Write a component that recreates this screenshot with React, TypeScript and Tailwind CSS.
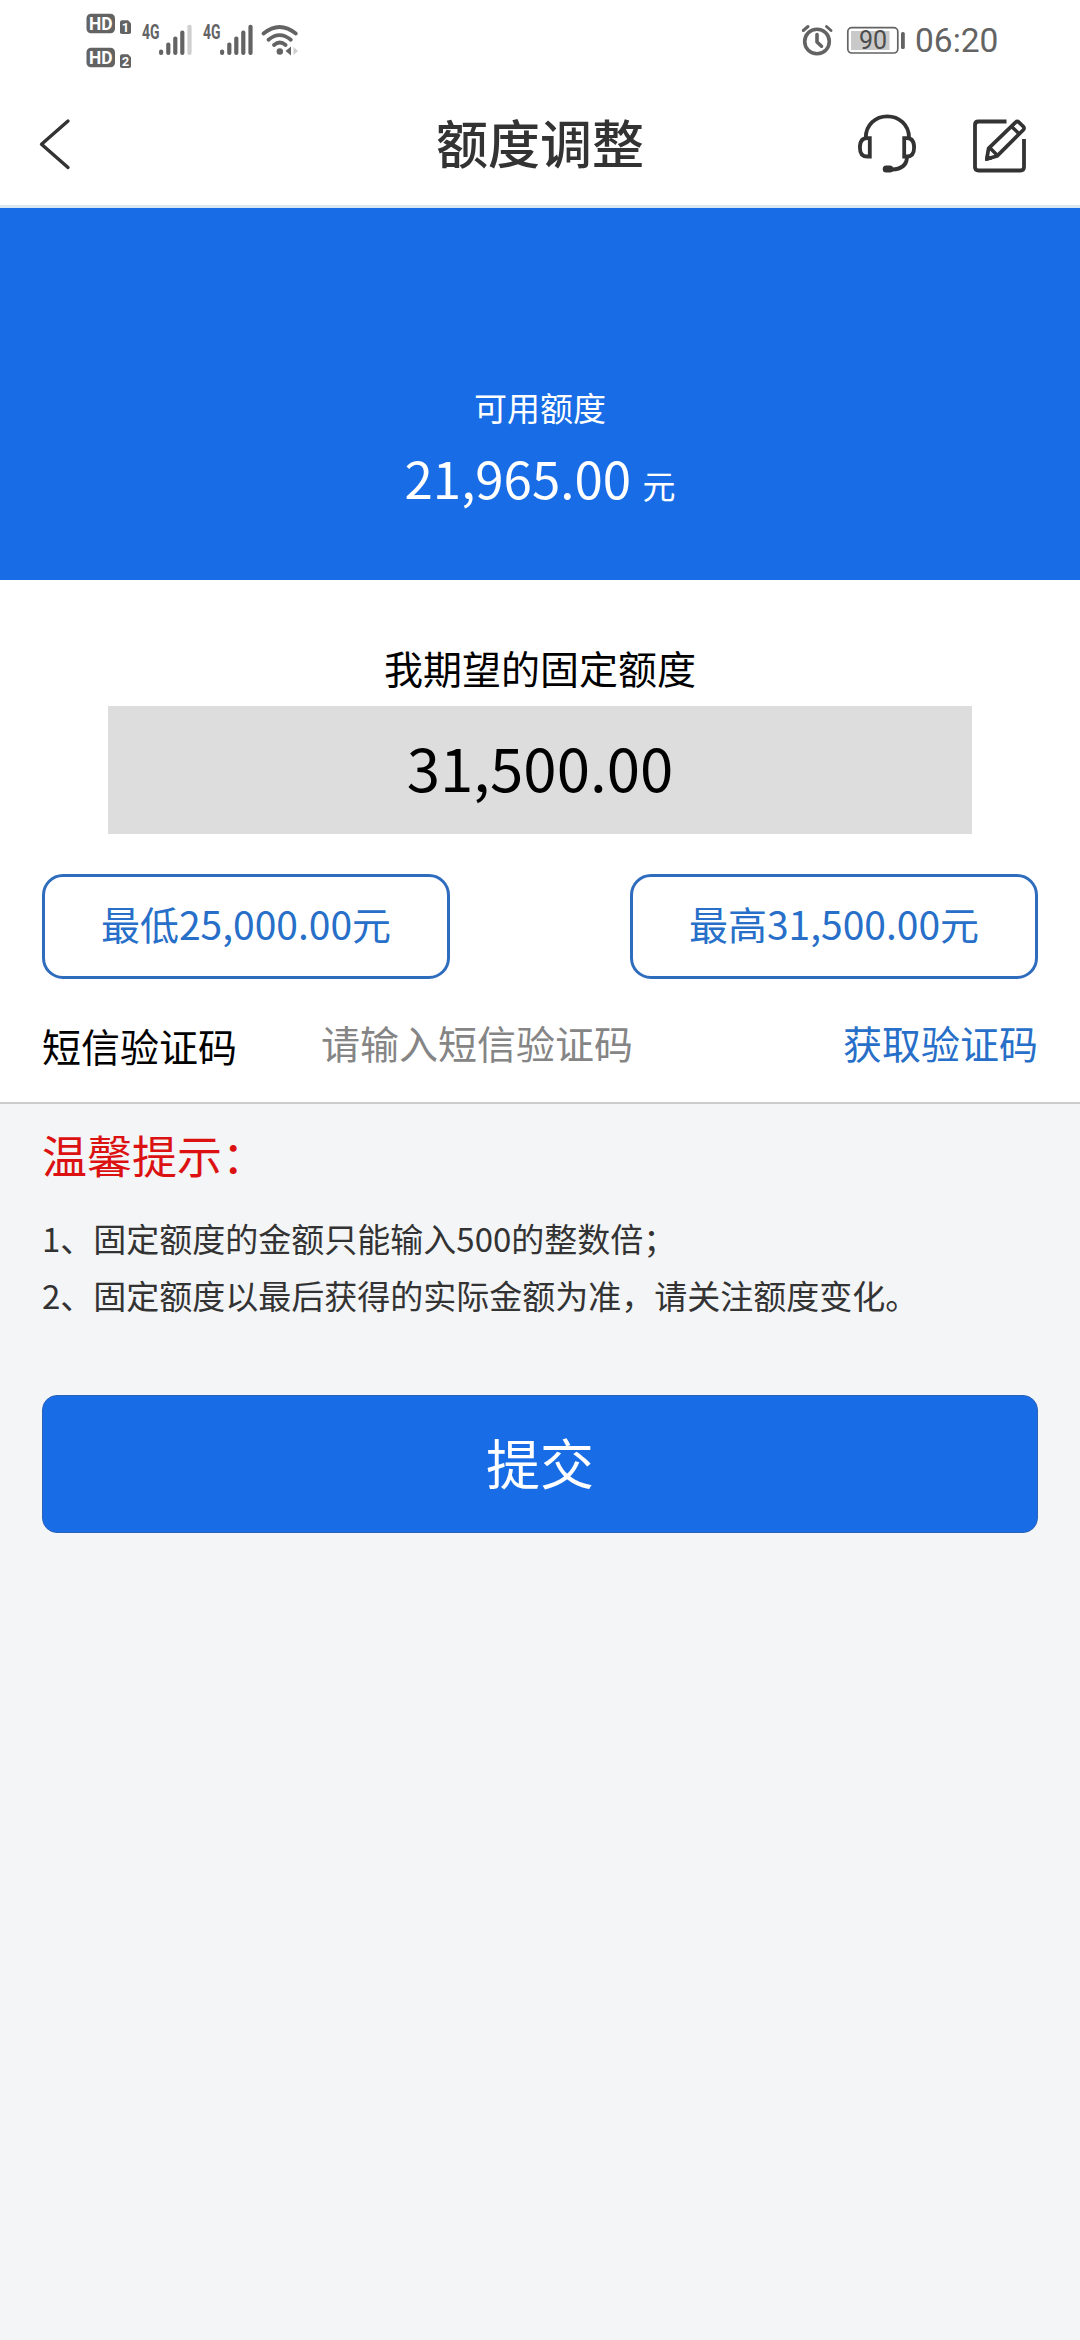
import React, { useState } from 'react';

const TIPS = [
  '1、固定额度的金额只能输入500的整数倍；',
  '2、固定额度以最后获得的实际金额为准，请关注额度变化。',
];

const SignalGroup: React.FC<{ x: number; weak?: boolean }> = ({ x, weak }) => (
  <g transform={`translate(${x} 0)`}>
    <text x="0" y="38.7" fontSize="19.5" fontWeight="700" textLength="17.5" lengthAdjust="spacingAndGlyphs">4G</text>
    <rect x="17" y="49.5" width="4.2" height="5.5" rx="2" />
    <rect x="24.2" y="42.5" width="4.2" height="12.5" rx="2" />
    <rect x="31.2" y="36.5" width="4.2" height="18.5" rx="2" />
    <rect x="38.2" y="30.5" width="4.2" height="24.5" rx="2" />
    <rect x="45.4" y="24.8" width="4.2" height="30.2" rx="2" fill={weak ? '#cfcfcf' : '#636363'} />
  </g>
);

const SimBadge: React.FC<{ y: number; slot: string }> = ({ y, slot }) => (
  <g transform={`translate(0 ${y})`}>
    <rect x="86.5" y="0" width="28.5" height="19.5" rx="4.5" />
    <text x="89" y="16.4" fontSize="19" fontWeight="700" fill="#fff" textLength="23.5" lengthAdjust="spacingAndGlyphs">HD</text>
    <path d="M120 8.5 Q120 6.5 122 6.5 H128 L131 9.5 V18.5 Q131 20.3 129 20.3 H122 Q120 20.3 120 18.5 Z" />
    <text x="125.6" y="18" fontSize="13" fontWeight="700" fill="#fff" textAnchor="middle">{slot}</text>
  </g>
);

const StatusLeft = () => (
  <svg className="h-20 w-80" viewBox="0 0 320 80" fill="#636363" fontFamily="Roboto, sans-serif">
    <SimBadge y={13.8} slot="1" />
    <SimBadge y={47.8} slot="2" />
    <SignalGroup x={142} weak />
    <SignalGroup x={203} />
    {/* wifi */}
    <g fill="none" stroke="#636363" strokeWidth="3.8" strokeLinecap="round">
      <path d="M263.5 33.5 Q279.5 20.5 295.8 33.5" />
      <path d="M268.5 39.8 Q279.5 30.5 290.8 39.8" />
      <path d="M274 45 Q279.8 40 285.6 45" />
    </g>
    <circle cx="279.8" cy="51.5" r="3.2" />
    <path d="M291 46.5 V55.5 L285.5 51 Z" />
    <path d="M293.5 47 V55 L298 51 Z" fill="#cfcfcf" />
  </svg>
);

const StatusRight = () => (
  <svg className="h-20 w-[120px]" viewBox="790 0 120 80" fill="none" stroke="#636363" strokeLinecap="round">
    {/* alarm */}
    <g strokeWidth="3.6">
      <circle cx="817" cy="41.5" r="12.3" />
      <path d="M817 34.5 V42 L821.5 46.2" strokeLinejoin="round" />
      <path d="M803.3 30.5 L808 26.5 M826.5 26.5 L831 30.5" strokeWidth="3" />
    </g>
    {/* battery */}
    <rect x="847.8" y="27.6" width="50" height="25.4" rx="4" strokeWidth="1.7" />
    <rect x="851" y="31" width="38.5" height="19" fill="#c9c9c9" stroke="none" />
    <rect x="901" y="32" width="3.8" height="17" rx="1.6" fill="#636363" stroke="none" />
    <text x="873" y="49.2" fontSize="25" fill="#4d4d4d" stroke="none" textAnchor="middle" fontFamily="Roboto, sans-serif">90</text>
  </svg>
);

const BackIcon = () => (
  <svg className="h-[60px] w-10" viewBox="34 112.5 40 60" fill="none" stroke="#333" strokeWidth="3.4" strokeLinecap="round" strokeLinejoin="round">
    <path d="M68 120.5 L41.5 143.7 L68 167" />
  </svg>
);

const ServiceIcon = () => (
  <svg className="h-[60px] w-[60px]" viewBox="37 22.5 60 60" fill="none" stroke="#333" strokeWidth="3.8">
    <path d="M45.8 47 C45.8 34.5 55.5 25.8 67.3 25.8 C79 25.8 89 34.5 89 47" />
    <path d="M49.8 47.6 V66 H47 C42 66 39.9 62.5 39.9 57 C39.9 51.5 42 47.6 47 47.6 Z" />
    <path d="M84.2 47.6 V66 H87 C92 66 94.1 62.5 94.1 57 C94.1 51.5 92 47.6 87 47.6 Z" />
    <path d="M87 67 C86.5 74.5 82 78.6 72 79" />
    <rect x="62.7" y="75" width="10.6" height="7" rx="3.5" fill="#333" stroke="none" />
  </svg>
);

const EditIcon = () => (
  <svg className="h-[60px] w-[60px]" viewBox="150 22.5 60 60" fill="none" stroke="#333" strokeWidth="3.8" strokeLinejoin="round">
    <path d="M186.5 31 H158.5 Q155 31 155 34.5 V76.5 Q155 80 158.5 80 H200.5 Q204 80 204 76.5 V48.5" />
    <path d="M166.8 68.6 L168.6 57.8 L195.5 31.8 Q197.3 30.2 199 31.8 L203.3 36 Q204.8 37.8 203.2 39.5 L177 65.6 Z" strokeWidth="3.7" />
    <path d="M169.5 57 L178 65.5 M191.5 36 L199.5 43.5" strokeWidth="3.4" />
    <path d="M165.5 70 L166.6 63.5 L172 68.5 Z" fill="#333" strokeWidth="1" />
  </svg>
);

const App: React.FC = () => {
  const [amount, setAmount] = useState('31,500.00');
  const [code, setCode] = useState('');

  return (
    <div className="flex h-[2340px] w-[1080px] flex-col bg-[#f3f5f7] font-['Noto_Sans_CJK_SC',sans-serif] text-[39px] text-black">
      {/* Status bar */}
      <div className="flex h-20 justify-between bg-white pr-[78px]">
        <StatusLeft />
        <div className="flex">
          <StatusRight />
          <span className="w-[92px] pl-[5px] font-[Roboto,sans-serif] text-[33.5px] leading-[82px] text-[#636363]">06:20</span>
        </div>
      </div>

      {/* Nav bar */}
      <header className="grid h-32 grid-cols-3 items-center border-b-3 border-[#dbe8f3] bg-white">
        <button className="pl-[34px]"><BackIcon /></button>
        <h1 className="pb-px text-center text-[52px] leading-[60px] font-medium text-[#333]">额度调整</h1>
        <div className="flex justify-end gap-[53px] pr-[50px]">
          <button><ServiceIcon /></button>
          <button><EditIcon /></button>
        </div>
      </header>

      {/* Available credit */}
      <section className="flex h-[372px] flex-col items-center bg-[#186de6] pt-[174px] text-[33px] text-white">
        <p className="leading-[50px]">可用额度</p>
        <p className="mt-2.5 leading-[70px]"><span className="text-[51px]">21,965.00 </span>元</p>
      </section>

      <section className="flex h-[524px] flex-col border-b-2 border-[#cbcbcb] bg-white">
        <p className="mt-[59px] text-center leading-[56px]">我期望的固定额度</p>
        <input
          value={amount}
          onChange={(e) => setAmount(e.target.value)}
          className="mx-[108px] mt-[11px] h-32 bg-[#ddd] pb-[9px] text-center text-[60px]"
        />
        <div className="mt-10 flex justify-between px-[42px] text-[#276fc8]">
          <button
            onClick={() => setAmount('25,000.00')}
            className="h-[105px] w-[408px] rounded-[21px] border-3 border-[#2e6cbd] pb-[7px] leading-[56px]"
          >
            最低25,000.00元
          </button>
          <button
            onClick={() => setAmount('31,500.00')}
            className="h-[105px] w-[408px] rounded-[21px] border-3 border-[#2e6cbd] pb-[7px] leading-[56px]"
          >
            最高31,500.00元
          </button>
        </div>
        <div className="mt-8 flex items-center px-[42px] leading-[56px]">
          <label className="w-[279px] pt-1.5">短信验证码</label>
          <input
            value={code}
            onChange={(e) => setCode(e.target.value)}
            placeholder="请输入短信验证码"
            className="min-w-0 flex-1 placeholder:text-[#858585]"
          />
          <button className="text-[#276fc8]">获取验证码</button>
        </div>
      </section>

      {/* Tips */}
      <section className="px-[42px] pt-[21px]">
        <h2 className="text-[45px] leading-[60px] text-[#dc1212]">温馨提示：</h2>
        <div className="mt-[25px] text-[33px] leading-[57px] text-[#333]">
          {TIPS.map((tip) => (
            <p key={tip}>{tip}</p>
          ))}
        </div>
        <button className="mt-[71px] h-[138px] w-full rounded-[15px] border border-[#2a62b5] bg-[#186de6] pb-[5px] text-[54px] text-white">
          提交
        </button>
      </section>
    </div>
  );
};

export default App;
